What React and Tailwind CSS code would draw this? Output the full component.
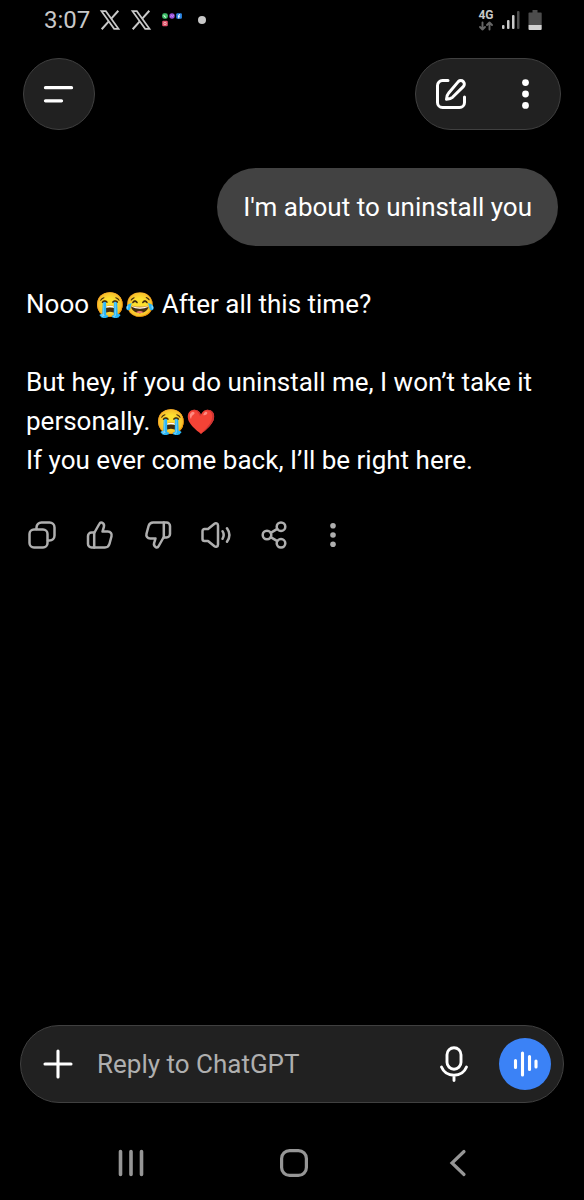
// Dark mobile chat screen: status bar, floating header, conversation, composer, system nav.

import React from "react";

const strokeProps = {
  fill: "none",
  stroke: "currentColor",
  strokeLinecap: "round",
  strokeLinejoin: "round"
};

const XLogo = () => (
  <svg viewBox="-1 -1 26 26" className="h-6 w-6" fill="none" stroke="currentColor" aria-hidden="true">
    <path d="M2.800 2.500h4.700l13.700 19h-4.700z" strokeWidth="1.900" />
    <path d="M21 2 13.600 10.300M10.400 13.700 3 22" strokeWidth="2.200" />
  </svg>
);

const AppCluster = () => (
  <svg viewBox="0 0 20 14" className="ml-0.5 h-3.5 w-5" aria-hidden="true">
    <rect x=".2" y=".2" width="5.600" height="5.600" rx="2" fill="#3fbf6a" />
    <path d="M2 2.200c0 1.200.8 2 2 2" stroke="#fff" strokeWidth="1" fill="none" />
    <circle cx="10" cy="3" r="2.700" fill="#9a4fd8" />
    <path d="M8.500 3.500l1.200-1 .8.800 1.200-1" stroke="#e0c8f5" strokeWidth=".7" fill="none" />
    <rect x="14.300" y=".2" width="5.600" height="5.600" rx="1" fill="#2b87e6" />
    <path d="M17.800 1.500c-.8 0-1 .3-1 1v3M16 3.200h1.800" stroke="#fff" strokeWidth="1" fill="none" />
    <rect x=".2" y="7.700" width="5.600" height="5.600" rx="1.200" fill="#e0506a" />
    <circle cx="3" cy="10.500" r="1.200" stroke="#f7c9c9" strokeWidth=".8" fill="none" />
  </svg>
);

const StatusBar = () => (
  <div className="flex h-10 items-center justify-between pr-[42px] pl-11 text-[#c8c8c8]">
    <div className="flex items-center">
      <span className="text-[24px] leading-10">3:07</span>
      <div className="flex items-center gap-[7px] pl-2">
        <XLogo />
        <XLogo />
        <AppCluster />
      </div>
      <span className="ml-4 h-2 w-2 rounded-full bg-[#c8c8c8]" />
    </div>
    <div className="flex items-center gap-2">
      <div className="flex w-4 flex-col items-center">
        <span className="text-[12px] leading-3 font-bold">4G</span>
        <svg viewBox="0 0 16 9" className="h-2.5 w-4 text-[#666]" aria-hidden="true" {...strokeProps} strokeWidth="1.900">
          <path d="M4.500 1v7M2 5.500 4.500 8 7 5.500M11.500 8V1M9 3.500 11.500 1 14 3.500" />
        </svg>
      </div>
      <svg viewBox="0 0 18 20" className="h-5 w-[18px]" aria-hidden="true" fill="currentColor">
        <rect x="0" y="15" width="2.500" height="4" rx="1" />
        <rect x="5" y="10" width="2.500" height="9" rx="1" />
        <rect x="10" y="5" width="2.500" height="14" rx="1" />
        <rect x="15" y="1" width="2.500" height="18" rx="1" fill="#4c4c4c" />
      </svg>
      <svg viewBox="0 0 14 20" className="h-5 w-3.5" aria-hidden="true">
        <path d="M4.500 0h5v2.500H13a.7.7 0 0 1 .7.700V15H.5V3.200a.7.7 0 0 1 .7-.7h3.300z" fill="#4c4c4c" />
        <path d="M.5 15h13.200v4a1 1 0 0 1-1 1H1.500a1 1 0 0 1-1-1z" fill="#d0d0d0" />
      </svg>
    </div>
  </div>
);

const Header = () => (
  <header className="flex items-center justify-between px-[23px] pt-[18px]">
    <button
      type="button"
      aria-label="Open menu"
      className="flex h-[72px] w-[72px] items-center justify-center rounded-full border border-[#404040] bg-[#212121] text-white"
    >
      <svg viewBox="0 0 32 32" className="h-8 w-8" {...strokeProps} strokeWidth="3.300">
        <path d="M2.500 9.700h26M2.500 22.800h16" />
      </svg>
    </button>
    <div className="flex h-[72px] w-[146px] items-center justify-between rounded-full border border-[#404040] bg-[#212121] px-[18px] text-white">
      <button type="button" aria-label="New chat">
        <svg viewBox="0 0 34 34" className="h-[34px] w-[34px]" {...strokeProps} strokeWidth="3">
          <path d="M14 3.500H8.500a5 5 0 0 0-5 5v17a5 5 0 0 0 5 5h17a5 5 0 0 0 5-5V20" />
          <path d="M24.300 4.600a3.500 3.500 0 0 1 5 5L18.500 20.300c-1.700 1.500-3.700 1.800-6 2 .1-2.300.4-4.500 2-6.100z" />
        </svg>
      </button>
      <button type="button" aria-label="More options">
        <svg viewBox="0 0 34 34" className="h-[34px] w-[34px]" fill="currentColor">
          <circle cx="17.500" cy="5.600" r="3.400" />
          <circle cx="17.500" cy="17" r="3.400" />
          <circle cx="17.500" cy="28.400" r="3.400" />
        </svg>
      </button>
    </div>
  </header>
);

const actions = [
  {
    label: "Copy",
    icon: (
      <>
        <rect x="2.500" y="9.500" width="18" height="18" rx="4.500" />
        <path d="M9.500 9V7.500a5 5 0 0 1 5-5h8a5 5 0 0 1 5 5v8a5 5 0 0 1-5 5H21" />
      </>
    )
  },
  {
    label: "Good response",
    icon: (
      <>
        <path d="M9.500 12.500 14.300 4c.6-1.200 1.600-1.800 2.700-1.300 1.700.8 2.400 2.300 1.900 4.100L17.500 11.500h5.300c2.800 0 4.400 2.100 3.700 4.800l-2 7.500c-.7 2.500-2.200 3.700-4.600 3.700H6.500A3.500 3.500 0 0 1 3 24v-8a3.500 3.500 0 0 1 3.500-3.500z" />
        <path d="M9.200 12.500v15" />
      </>
    )
  },
  {
    label: "Bad response",
    icon: (
      <>
        <path d="M20.500 17.500 15.700 26c-.6 1.200-1.600 1.800-2.700 1.300-1.700-.8-2.400-2.300-1.900-4.100l1.400-4.700H7.200c-2.800 0-4.400-2.100-3.700-4.800l2-7.500C6.200 3.700 7.700 2.500 10.100 2.500h13.400A3.500 3.500 0 0 1 27 6v8a3.500 3.500 0 0 1-3.500 3.500z" />
        <path d="M20.800 17.500v-15" />
      </>
    )
  },
  {
    label: "Read aloud",
    icon: (
      <>
        <path d="M1.500 11a2 2 0 0 1 2-2H7l6.500-5.300c1.300-1 3.500-.4 3.500 1.800v19c0 2.200-2.200 2.800-3.500 1.800L7 21H3.500a2 2 0 0 1-2-2z" />
        <path d="M21.500 11.200c1.500 2.400 1.500 5.200 0 7.600M26 8.200c3 4.200 3 9.400 0 13.600" />
      </>
    )
  },
  {
    label: "Share",
    icon: (
      <>
        <circle cx="8" cy="15" r="4.300" />
        <circle cx="22" cy="6.700" r="4.300" />
        <circle cx="22" cy="23.300" r="4.300" />
        <path d="M11.700 12.800 18.300 8.900M11.700 17.200l6.600 3.900" />
      </>
    )
  },
  {
    label: "More",
    icon: (
      <g fill="currentColor" stroke="none">
        <circle cx="16" cy="5.700" r="2.800" />
        <circle cx="16" cy="15" r="2.800" />
        <circle cx="16" cy="24.300" r="2.800" />
      </g>
    )
  }
];

// Emoji glyphs run wide at body size, so they are set slightly smaller
const Emoji = ({ children }) => (
  <span className="inline-block text-[24px] leading-none">{children}</span>
);

const Conversation = () => (
  <main className="flex flex-1 flex-col px-[26px] pt-[38px] text-[26px] leading-[39px]">
    <div className="flex min-h-[78px] items-center self-end rounded-[39px] bg-[#424242] px-[26px]">
      <p>I&apos;m about to uninstall you</p>
    </div>

    <div className="mt-[39px] space-y-[39px]">
      <p>
        Nooo <Emoji>😭😂</Emoji> After all this time?
      </p>
      <p>
        But hey, if you do uninstall me, I won’t take it personally. <Emoji>😭❤️</Emoji>
        <br />
        If you ever come back, I’ll be right here.
      </p>
    </div>

    <div className="mt-10 flex gap-[26px] text-[#afafaf]">
      {actions.map((action) => (
        <button key={action.label} type="button" aria-label={action.label} className="px-px">
          <svg viewBox="0 0 30 30" className="h-[30px] w-[30px]" {...strokeProps} strokeWidth="2.500">
            {action.icon}
          </svg>
        </button>
      ))}
    </div>
  </main>
);

const Composer = () => (
  <form
    onSubmit={(event) => event.preventDefault()}
    className="mx-5 flex h-[78px] items-center rounded-full border border-[#404040] bg-[#212121] pr-3 pl-[21px]"
  >
    <button type="button" aria-label="Add attachment">
      <svg viewBox="0 0 32 32" className="h-8 w-8" {...strokeProps} strokeWidth="3.100">
        <path d="M16 3v26M3 16h26" />
      </svg>
    </button>
    <input
      type="text"
      aria-label="Reply to ChatGPT"
      placeholder="Reply to ChatGPT"
      className="ml-[23px] min-w-0 flex-1 bg-transparent text-[26px] leading-[39px] text-white outline-none placeholder:text-[#afafaf]"
    />
    <button type="button" aria-label="Dictate">
      <svg viewBox="0 0 36 36" className="h-9 w-9" {...strokeProps} strokeWidth="2.900">
        <rect x="11" y="1.700" width="14" height="21.500" rx="7" />
        <path d="M5.500 21c2.200 5.300 6.800 8.200 12.500 8.200S28.300 26.300 30.500 21M18 29.500v5" />
      </svg>
    </button>
    <button
      type="button"
      aria-label="Start voice mode"
      className="ml-[27px] flex h-[52px] w-[52px] items-center justify-center rounded-full bg-[#3b82f6]"
    >
      <svg viewBox="0 0 28 28" className="h-7 w-7" {...strokeProps} strokeWidth="3.100">
        <path d="M4.500 10.500v7M11.500 3v22M18.500 6.500v13M25 11v6" />
      </svg>
    </button>
  </form>
);

const SystemNav = () => (
  <nav className="mt-[22px] flex h-[75px] items-center justify-around pr-11 pl-[49px] text-[#969696]">
    <button type="button" aria-label="Recent apps">
      <svg viewBox="0 0 28 28" className="h-7 w-7" {...strokeProps} strokeWidth="3.600">
        <path d="M3.500 2.500v23M14 2.500v23M24.500 2.500v23" />
      </svg>
    </button>
    <button type="button" aria-label="Home">
      <svg viewBox="0 0 28 28" className="h-7 w-7" {...strokeProps} strokeWidth="3.200">
        <rect x="1.600" y="1.600" width="24.800" height="24.800" rx="8" />
      </svg>
    </button>
    <button type="button" aria-label="Back">
      <svg viewBox="0 0 28 28" className="h-7 w-7" {...strokeProps} strokeWidth="3.200" strokeLinejoin="miter">
        <path d="M20 2.500 8 14l12 11.500" />
      </svg>
    </button>
  </nav>
);

const App = () => (
  <div className="flex min-h-screen flex-col bg-black font-[Roboto,'Noto_Color_Emoji',sans-serif] text-white">
    <StatusBar />
    <Header />
    <Conversation />
    <Composer />
    <SystemNav />
  </div>
);

export default App;
